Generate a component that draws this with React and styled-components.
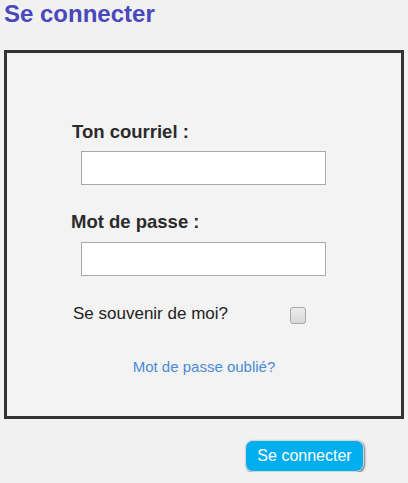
import React from 'react'
import styled, { createGlobalStyle } from 'styled-components'

const GlobalStyle = createGlobalStyle`
    body {
        margin: 0;
        background-color: #f1f1f1;
        font-family: "Liberation Sans", Arial, sans-serif;
    }
`

const Page = styled.div`
    display: flex;
    flex-direction: column;
    width: 408px;
`

const Title = styled.h1`
    margin: 0 0 0 4px;
    font-size: 24px;
    line-height: 28px;
    font-weight: bold;
    color: #4848bc;
`

const LoginBox = styled.div`
    margin: 22px 4px 0 4px;
    border: 3px solid #333;
    background-color: #f3f3f3;
    padding: 68px 0 40px 65px;
    display: flex;
    flex-direction: column;
`

const Label = styled.label`
    font-size: 18.5px;
    line-height: 22px;
    font-weight: bold;
    color: #2b2b2b;
    margin-top: ${props => props.$top || 0}px;
    margin-left: ${props => props.$indent || 0}px;
`

const Input = styled.input`
    box-sizing: border-box;
    width: 245px;
    height: 34px;
    margin: ${props => props.$top || 8}px 0 0 9px;
    border: 1px solid #aaa;
    background-color: #fff;
    outline: none;
`

const RememberRow = styled.div`
    display: flex;
    align-items: center;
    margin-top: 28px;
    margin-left: 1px;
    height: 20px;
`

const RememberText = styled.span`
    font-size: 17px;
    line-height: 20px;
    color: #222;
    width: 217px;
`

const Check = styled.span`
    box-sizing: border-box;
    width: 16px;
    height: 17px;
    margin-top: 3px;
    border: 1px solid #a8a8a8;
    border-radius: 3px;
    background: linear-gradient(#ececec, #d8d8d8);
`

const ForgotLink = styled.a`
    align-self: center;
    margin: 34px 65px 0 0;
    font-size: 15px;
    line-height: 18px;
    color: #4a8bd6;
    text-decoration: none;
`

const Footer = styled.div`
    display: flex;
    justify-content: flex-end;
    padding: 21px 44px 0 0;
`

const SubmitButton = styled.button`
    width: 119px;
    height: 32px;
    border: 1px solid #d4d4d4;
    border-radius: 8px;
    background-color: #00aeef;
    box-shadow: 1px 1px 2px #7a7a7a;
    color: #fff;
    font-family: "Liberation Sans", Arial, sans-serif;
    font-size: 16px;
    padding: 0;
`

function App() {
    return (
        <Page>
            <GlobalStyle />
            <Title>Se connecter</Title>
            <LoginBox>
                <Label>Ton courriel :</Label>
                <Input type="text" />
                <Label $top={26} $indent={-1}>Mot de passe :</Label>
                <Input type="password" $top={9} />
                <RememberRow>
                    <RememberText>Se souvenir de moi?</RememberText>
                    <Check />
                </RememberRow>
                <ForgotLink href="#">Mot de passe oublié?</ForgotLink>
            </LoginBox>
            <Footer>
                <SubmitButton>Se connecter</SubmitButton>
            </Footer>
        </Page>
    )
}

export default App
